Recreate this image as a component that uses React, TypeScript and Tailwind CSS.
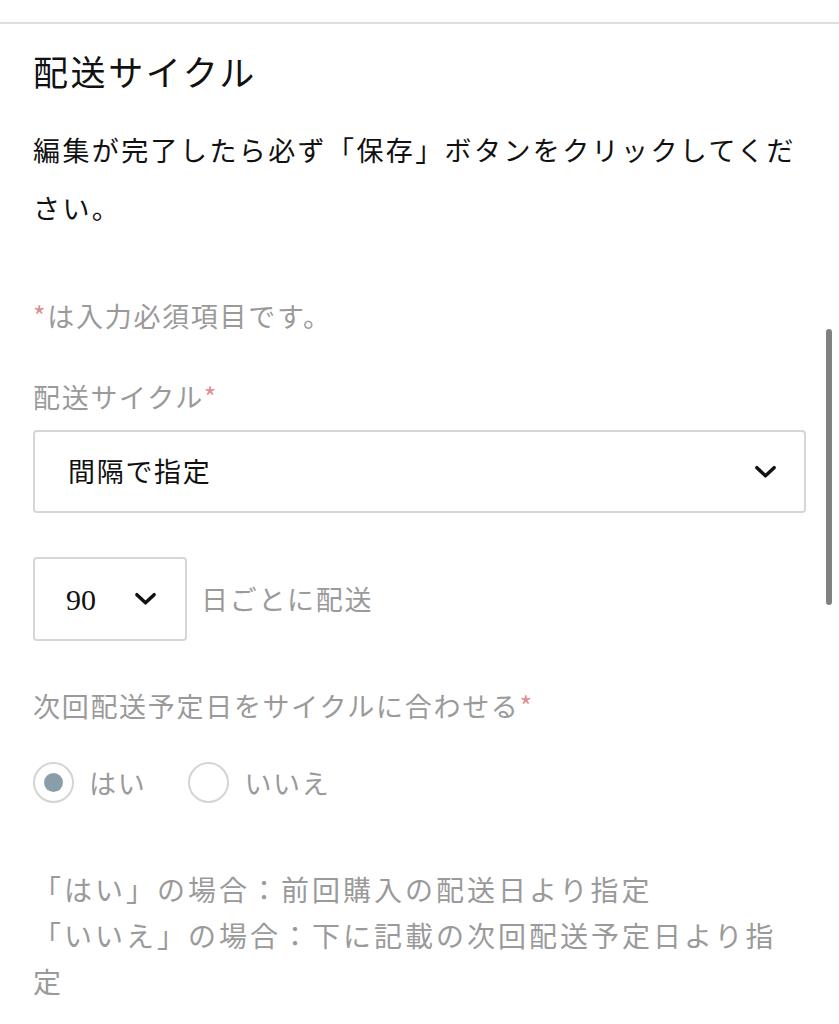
import React from 'react'

const jp = { fontFamily: '"Noto Sans CJK JP", "Noto Sans", sans-serif' }

function Chevron({ className = '' }: { className?: string }) {
  return (
    <svg viewBox="0 0 24 14" className={className} fill="none" stroke="#111" strokeWidth="3.6" strokeLinecap="round" strokeLinejoin="round">
      <path d="M3 2.5 L12 11 L21 2.5" />
    </svg>
  )
}

function Radio({ label, checked }: { label: string; checked?: boolean }) {
  return (
    <label className="flex items-center gap-[15px]">
      <span className="w-[41px] h-[41px] rounded-full border-2 border-[#d4d4d4] flex items-center justify-center bg-white">
        {checked && <span className="w-[19px] h-[19px] rounded-full bg-[#8a9ea9]" />}
      </span>
      <span className="text-[27px] leading-[40px] tracking-[1.7px] text-[#9a9a9a]">{label}</span>
    </label>
  )
}

export default function App() {
  return (
    <div className="relative min-h-[1024px] bg-white" style={jp}>
      <div className="h-[22px]" />
      <div className="h-[2px] bg-[#dedede]" />

      <div className="px-[33px]">
        <h2 className="mt-[27px] text-[35px] leading-[40px] tracking-[2.6px] text-[#111] font-normal">配送サイクル</h2>

        <p className="mt-[30px] text-[27px] leading-[58px] tracking-[2.4px] text-[#111]">
          編集が完了したら必ず「保存」ボタンをクリックしてください。
        </p>

        <p className="mt-[59px] text-[27px] leading-[40px] tracking-[1.7px] text-[#9a9a9a]">
          <span className="text-[#dc8f90]">*</span>は入力必須項目です。
        </p>

        <div className="mt-[41px] text-[27px] leading-[40px] tracking-[1.7px] text-[#9a9a9a]">
          配送サイクル<span className="text-[#dc8f90]">*</span>
        </div>

        <div className="mt-[13px] h-[83px] border-2 border-[#d6d6d6] rounded-[4px] flex items-center justify-between pl-[33px] pr-[27px]">
          <span className="text-[27px] tracking-[1.7px] text-[#111]">間隔で指定</span>
          <Chevron className="w-[23px] h-[14px]" />
        </div>

        <div className="mt-[44px] flex items-center gap-[14px]">
          <div className="w-[154px] h-[84px] border-2 border-[#d6d6d6] rounded-[4px] flex items-center justify-between pl-[31px] pr-[28px]">
            <span className="text-[30px] text-[#111]" style={{ fontFamily: '"Liberation Serif", serif' }}>90</span>
            <Chevron className="w-[23px] h-[14px]" />
          </div>
          <span className="text-[27px] tracking-[1.7px] text-[#9a9a9a]">日ごとに配送</span>
        </div>

        <div className="mt-[45px] text-[27px] leading-[40px] tracking-[1.7px] text-[#9a9a9a]">
          次回配送予定日をサイクルに合わせる<span className="text-[#dc8f90]">*</span>
        </div>

        <div className="mt-[36px] flex items-center gap-[42px]">
          <Radio label="はい" checked />
          <Radio label="いいえ" />
        </div>

        <p className="mt-[63px] text-[28px] leading-[46px] tracking-[3px] text-[#9a9a9a]">
          「はい」の場合：前回購入の配送日より指定
          <br />
          「いいえ」の場合：下に記載の次回配送予定日より指定
        </p>
      </div>

      <div className="absolute left-[826px] top-[329px] w-[6px] h-[276px] rounded-full bg-[#808080]" />
    </div>
  )
}
